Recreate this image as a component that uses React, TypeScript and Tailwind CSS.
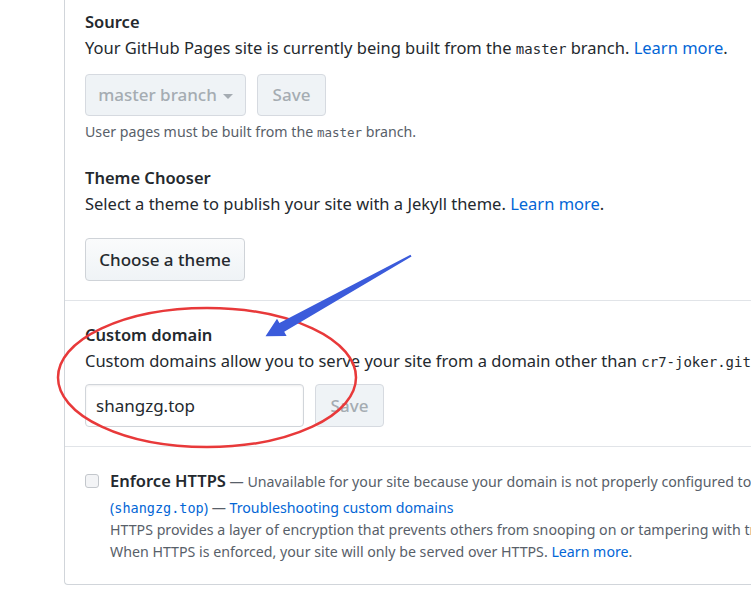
import React from "react";

const sans = { fontFamily: '"Noto Sans", "Open Sans", sans-serif' };
const mono = { fontFamily: '"DejaVu Sans Mono", "Liberation Mono", monospace' };

export default function App() {
  return (
    <div className="relative w-[751px] h-[591px] overflow-hidden bg-white text-[#24292e]" style={sans}>
      <div className="ml-[64px] w-[760px] h-[585px] border-l border-b border-[#d1d5da] rounded-bl-[4px]">
        {/* Source */}
        <div className="pl-[20px] pt-[10px]">
          <h3 className="text-[16.5px] leading-[24px] font-semibold">Source</h3>
          <p className="text-[16.5px] leading-[26px] mt-[1px] whitespace-nowrap">
            Your GitHub Pages site is currently being built from the{" "}
            <code className="text-[14px]" style={mono}>master</code> branch.{" "}
            <span className="text-[#0366d6]">Learn more</span>.
          </p>
          <div className="flex gap-[11px] mt-[12px]">
            <div className="w-[161px] h-[42px] rounded-[4px] border border-[#d6dae0] bg-[#eff3f6] flex items-center justify-center text-[17px] text-[#a5acb2] font-medium">
              master branch
              <span className="ml-[6px] mt-[2px] w-0 h-0 border-l-[5px] border-r-[5px] border-t-[5px] border-l-transparent border-r-transparent border-t-[#a5acb2]" />
            </div>
            <div className="w-[69px] h-[42px] rounded-[4px] border border-[#d6dae0] bg-[#eff3f6] flex items-center justify-center text-[17px] text-[#a5acb2] font-medium">
              Save
            </div>
          </div>
          <p className="text-[14.2px] leading-[20px] mt-[6px] text-[#586069] whitespace-nowrap">
            User pages must be built from the{" "}
            <code className="text-[12.5px]" style={mono}>master</code> branch.
          </p>
        </div>

        {/* Theme chooser */}
        <div className="pl-[20px] pt-[23px]">
          <h3 className="text-[16.5px] leading-[24px] font-semibold">Theme Chooser</h3>
          <p className="text-[16.5px] leading-[26px] mt-[1px] whitespace-nowrap">
            Select a theme to publish your site with a Jekyll theme.{" "}
            <span className="text-[#0366d6]">Learn more</span>.
          </p>
          <div className="mt-[21px] w-[160px] h-[43px] rounded-[4px] border border-[#cfd3d8] bg-gradient-to-b from-[#fafbfc] to-[#eff3f6] flex items-center justify-center text-[17px] font-medium">
            Choose a theme
          </div>
        </div>

        <div className="mt-[19px] border-t border-[#e1e4e8]" />

        {/* Custom domain */}
        <div className="pl-[20px] pt-[22px]">
          <h3 className="text-[16.5px] leading-[24px] font-semibold">Custom domain</h3>
          <p className="text-[16.5px] leading-[26px] mt-[1px] whitespace-nowrap">
            Custom domains allow you to serve your site from a domain other than{" "}
            <code className="text-[14px]" style={mono}>cr7-joker.github.io</code>.
          </p>
          <div className="flex gap-[11px] mt-[9px]">
            <div className="w-[219px] h-[43px] rounded-[4px] border border-[#d1d5da] bg-white flex items-center pl-[10px] text-[17px] shadow-[inset_0_1px_2px_rgba(27,31,35,0.075)]">
              shangzg.top
            </div>
            <div className="w-[69px] h-[43px] rounded-[4px] border border-[#d6dae0] bg-[#eff3f6] flex items-center justify-center text-[17px] text-[#a5acb2] font-medium">
              Save
            </div>
          </div>
        </div>

        <div className="mt-[19px] border-t border-[#e1e4e8]" />

        {/* Enforce HTTPS */}
        <div className="pl-[20px] pt-[22px] flex">
          <div className="w-[14px] h-[14px] mt-[5px] rounded-[3px] border border-[#c3c7cc] bg-[#f3f4f6] shrink-0" />
          <div className="ml-[11px]">
            <p className="whitespace-nowrap leading-[24px]">
              <span className="text-[16.5px] font-semibold">Enforce HTTPS</span>
              <span className="text-[14.2px] text-[#586069]">
                {" "}— Unavailable for your site because your domain is not properly configured to support HTTPS
              </span>
            </p>
            <p className="text-[14.2px] leading-[22px] mt-[3px] text-[#586069] whitespace-nowrap">
              <span className="text-[#0366d6]">(</span>
              <code className="text-[13.5px] text-[#0366d6]" style={mono}>shangzg.top</code>
              <span className="text-[#0366d6]">)</span> —{" "}
              <span className="text-[#0366d6]">Troubleshooting custom domains</span>
            </p>
            <p className="text-[14.2px] leading-[22px] text-[#586069] whitespace-nowrap">
              HTTPS provides a layer of encryption that prevents others from snooping on or tampering with traffic to your site.
            </p>
            <p className="text-[14.2px] leading-[22px] text-[#586069] whitespace-nowrap">
              When HTTPS is enforced, your site will only be served over HTTPS.{" "}
              <span className="text-[#0366d6]">Learn more</span>.
            </p>
          </div>
        </div>
      </div>

      {/* Annotations */}
      <svg className="absolute left-0 top-0 pointer-events-none" width="751" height="591" viewBox="0 0 751 591">
        <ellipse cx="207" cy="377.5" rx="149" ry="69.5" fill="none" stroke="#e8393a" strokeWidth="2.5" />
        <path d="M411.5 256.4 L284.2 331.7 L286.6 336 L265.5 336.2 L277 318.8 L279.4 322.9 L410.5 254.8 Z" fill="#3b5bdb" />
      </svg>
    </div>
  );
}
